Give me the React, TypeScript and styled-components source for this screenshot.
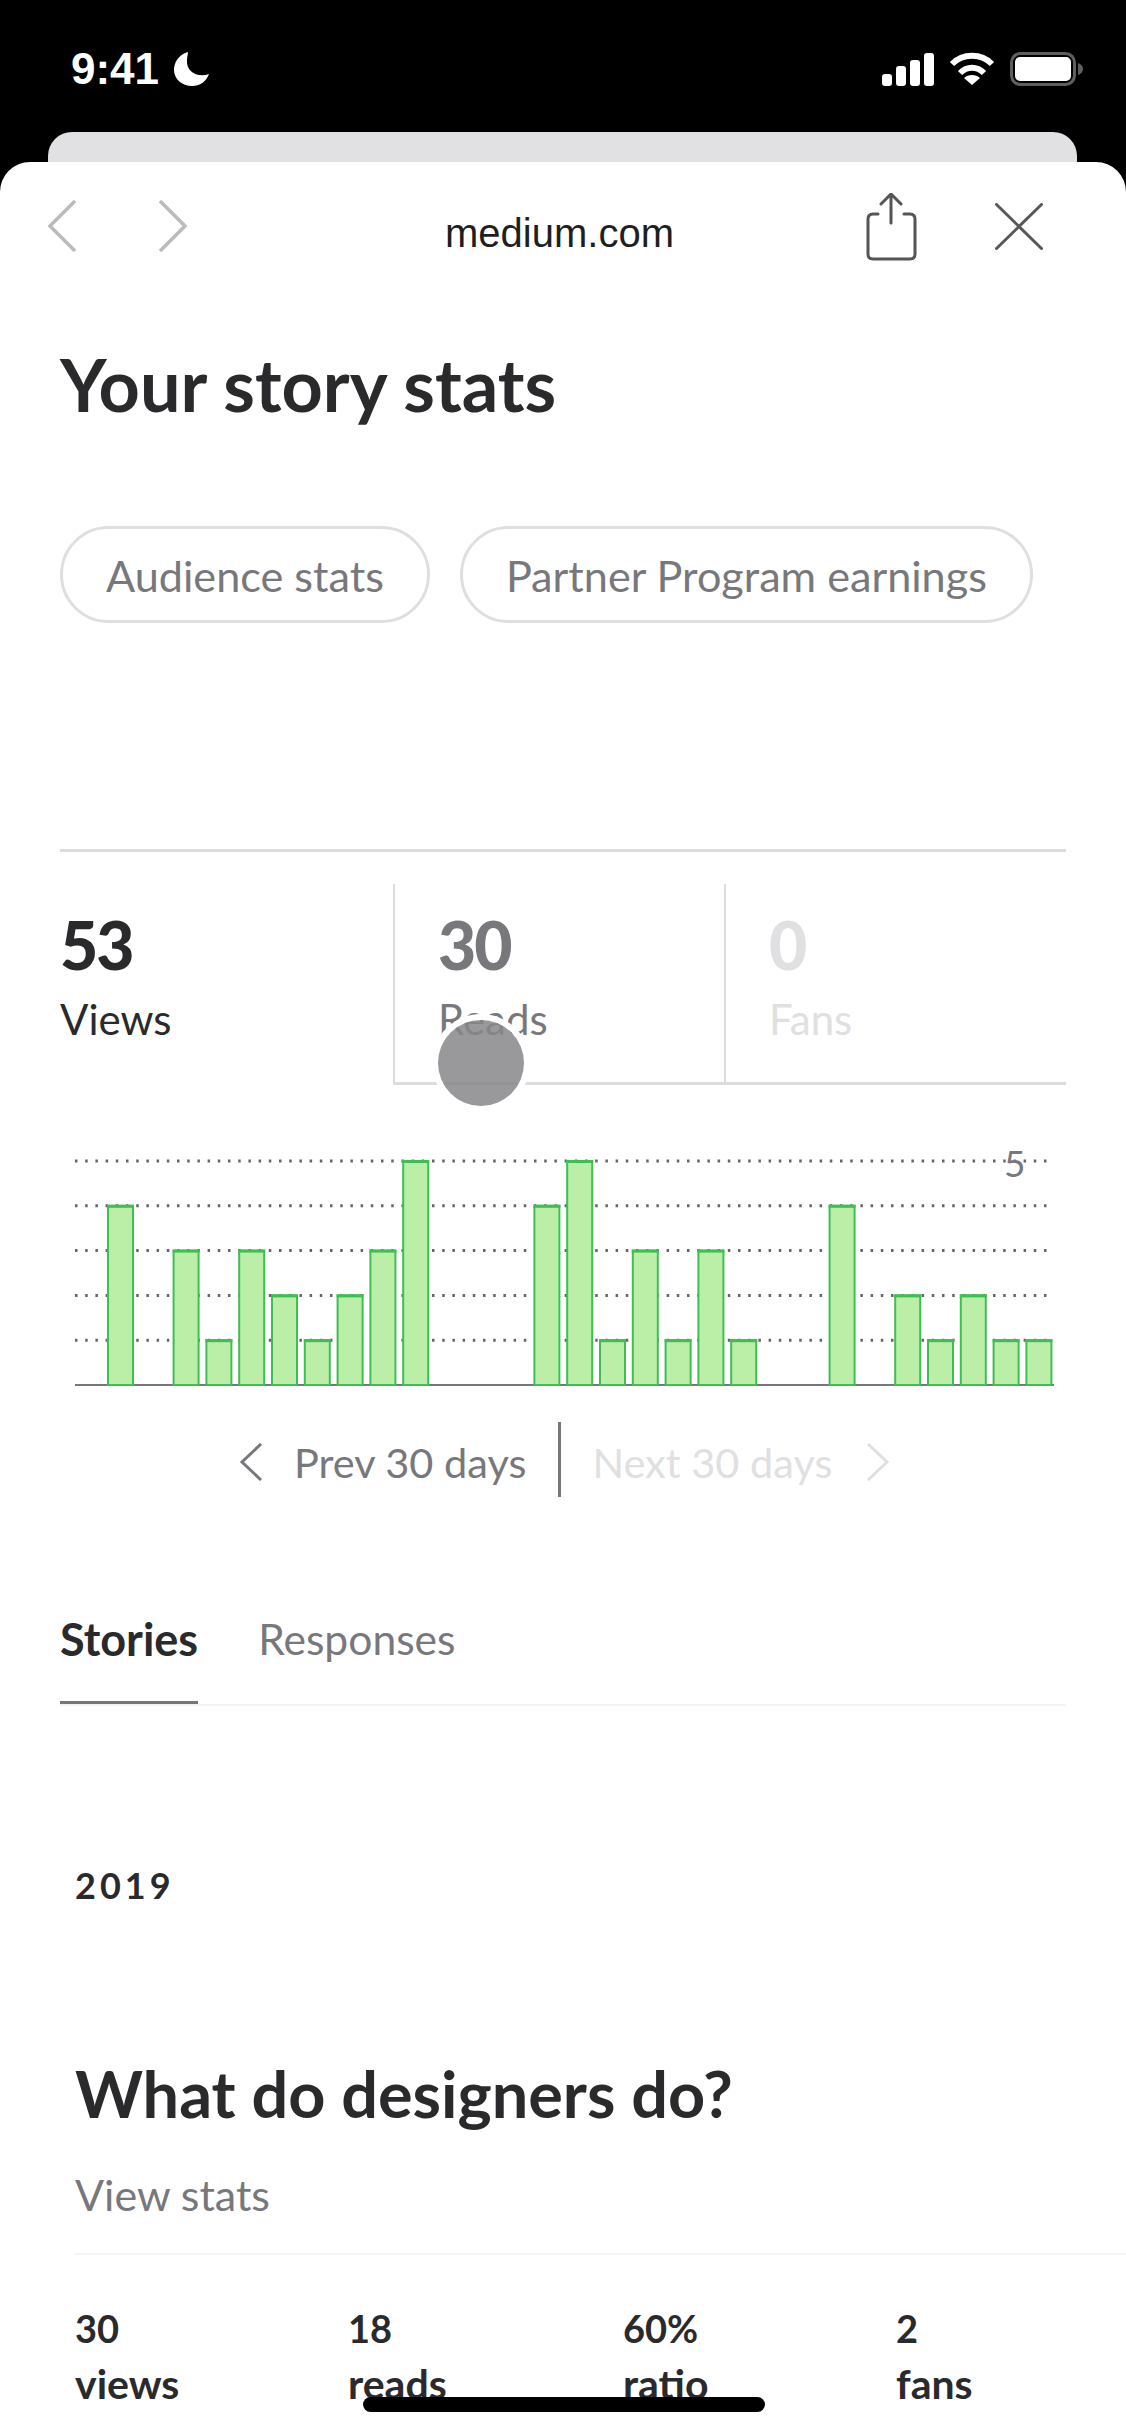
import React from "react";
import styled, { createGlobalStyle } from "styled-components";

const Global = createGlobalStyle`
  html, body { margin: 0; padding: 0; background: #000; }
  * { box-sizing: border-box; }
`;
const SANS = `Lato, "Noto Sans", sans-serif`;

const Screen = styled.div`
  position: relative;
  width: 1126px;
  height: 2436px;
  overflow: hidden;
  background: #000;
  font-family: ${SANS};
`;
const StatusBar = styled.div`
  height: 132px;
  padding: 47px 43px 0 71px;
  display: flex;
  justify-content: space-between;
  align-items: flex-start;
  color: #fff;
`;
const TimeGroup = styled.div`
  display: flex;
  align-items: center;
  gap: 15px;
  height: 44px;
`;
const Time = styled.span`
  font-family: "Liberation Sans", sans-serif;
  font-weight: 700;
  font-size: 44px;
  line-height: 44px;
`;
const StatusIcons = styled.div`
  display: flex;
  align-items: center;
  gap: 15px;
  height: 44px;
`;
const BackCard = styled.div`
  height: 30px;
  margin: 0 49px 0 48px;
  background: #e1e1e3;
  border-radius: 24px 24px 0 0;
`;
const Sheet = styled.div`
  height: 2274px;
  background: #fff;
  border-radius: 30px 30px 0 0;
`;
const NavBar = styled.div`
  height: 124px;
  padding: 31px 83px 0 48px;
  display: grid;
  grid-template-columns: 110px 30px 1fr 51px 126px;
  align-items: start;
`;
const NavIcon = styled.svg<{ $top: number; $left?: number }>`
  display: block;
  fill: none;
  margin-top: ${(p) => p.$top}px;
  margin-left: ${(p) => p.$left ?? 0}px;
`;
const Domain = styled.div`
  font-family: "Liberation Sans", sans-serif;
  font-size: 40px;
  line-height: 46px;
  color: #1f1f21;
  text-align: center;
  margin-top: 17px;
  padding-left: 65px;
`;
const Content = styled.div`
  padding: 0 60px;
`;
const Heading = styled.h1`
  margin: 58px 0 0;
  font-size: 72px;
  line-height: 80px;
  font-weight: 700;
  color: #2a2a2c;
`;
const PillRow = styled.div`
  display: flex;
  gap: 30px;
  margin-top: 102px;
`;
const Pill = styled.div`
  height: 97px;
  padding: 0 43px;
  border: 3px solid #dfdfe1;
  border-radius: 49px;
  display: flex;
  align-items: center;
  font-size: 43.2px;
  color: #78787c;
`;
const StatsBlock = styled.div`
  position: relative;
  margin-top: 226px;
  width: 1006px;
  border-top: 3px solid #dcdcde;
  padding-top: 32px;
  display: grid;
  grid-template-columns: 333px 331px 342px;
`;
const StatCell = styled.div<{ $tone: string; $first?: boolean }>`
  height: 201px;
  padding: 26px 0 0 ${(p) => (p.$first ? 0 : 43)}px;
  color: ${(p) => p.$tone};
  border-left: ${(p) => (p.$first ? "none" : "2px solid #dcdcde")};
  border-bottom: ${(p) => (p.$first ? "none" : "3px solid #dcdcde")};
`;
const StatNumber = styled.div`
  font-size: 66px;
  line-height: 70px;
  font-weight: 900;
  letter-spacing: -2px;
`;
const StatLabel = styled.div`
  font-size: 42px;
  line-height: 50px;
  margin-top: 14px;
`;
const Touch = styled.div`
  position: absolute;
  left: 378px;
  top: 168px;
  width: 86px;
  height: 86px;
  border-radius: 50%;
  background: rgba(135, 135, 137, 0.85);
  box-shadow: 0 0 0 6px #fff;
`;
const ChartWrap = styled.div`
  margin-top: 64px;
  height: 265px;
`;
const Chart = styled.svg`
  display: block;
`;
const Pager = styled.div`
  margin-top: 7px;
  height: 76px;
  display: flex;
  align-items: center;
  padding-left: 179px;
  font-size: 41.5px;
`;
const PagerLink = styled.div<{ $on: boolean }>`
  display: flex;
  align-items: center;
  gap: ${(p) => (p.$on ? 31 : 34)}px;
  padding-top: 5px;
  color: ${(p) => (p.$on ? "#78787c" : "#e0e0e2")};
`;
const PagerDivider = styled.div`
  width: 3px;
  height: 75px;
  background: #77777b;
  margin: 0 31px 0 32px;
`;
const Tabs = styled.div`
  margin-top: 103px;
  width: 1006px;
  display: flex;
  gap: 60px;
  border-bottom: 2px solid #f3f3f4;
  height: 106px;
`;
const Tab = styled.div<{ $active?: boolean }>`
  height: 104px;
  padding-top: 14px;
  font-size: ${(p) => (p.$active ? 45 : 42.6)}px;
  line-height: 50px;
  font-weight: ${(p) => (p.$active ? 700 : 400)};
  color: ${(p) => (p.$active ? "#2a2a2c" : "#78787c")};
  border-bottom: ${(p) => (p.$active ? "3px solid #77777b" : "none")};
`;
const Story = styled.div`
  padding-left: 15px;
  margin-right: -60px;
`;
const Year = styled.div`
  margin-top: 157px;
  font-size: 36px;
  line-height: 44px;
  font-weight: 700;
  letter-spacing: 4px;
  color: #2a2a2c;
`;
const StoryTitle = styled.h2`
  margin: 146px 0 0;
  font-size: 64.8px;
  line-height: 80px;
  font-weight: 700;
  color: #2a2a2c;
`;
const ViewStats = styled.div`
  margin-top: 37px;
  font-size: 43px;
  line-height: 50px;
  color: #78787c;
`;
const StoryDivider = styled.div`
  margin-top: 33px;
  height: 2px;
  background: #f4f4f5;
`;
const StoryStats = styled.div`
  margin-top: 46px;
  display: grid;
  grid-template-columns: 273px 275px 273px 1fr;
  font-weight: 700;
  color: #2a2a2c;
`;
const StoryValue = styled.div`
  font-size: 38px;
  line-height: 55px;
`;
const StoryLabel = styled.div`
  font-size: 41px;
  line-height: 56px;
`;
const HomeIndicator = styled.div`
  position: absolute;
  left: 363px;
  top: 2397px;
  width: 402px;
  height: 15px;
  border-radius: 8px;
  background: #000;
`;

const values = [0,4,0,3,1,3,2,1,2,3,5,0,0,0,4,5,1,3,1,3,1,0,0,4,0,2,1,2,1,1];
const storyStats = [
  ["30", "views"],
  ["18", "reads"],
  ["60%", "ratio"],
  ["2", "fans"],
];

function BarChart() {
  const unit = 44.8;
  const base = 236;
  const slot = 32.8;
  return (
    <Chart width="1006" height="265" viewBox="0 0 1006 265">
      {[1, 2, 3, 4, 5].map((n) => (
        <line key={n} x1="15" x2="994" y1={base - n * unit} y2={base - n * unit} stroke="#66666a" strokeWidth="3" strokeDasharray="2.5 7.7" />
      ))}
      <line x1="15" x2="994" y1={base} y2={base} stroke="#77777b" strokeWidth="2" />
      {values.map((v, i) =>
        v === 0 ? null : (
          <g key={i}>
            <rect x={48 + (i - 1) * slot} y={base - v * unit} width="25" height={v * unit} fill="#bbefa8" stroke="#3fbe52" strokeWidth="2" />
            <rect x={47 + (i - 1) * slot} y={base - v * unit - 1} width="27" height="3" fill="#3fbe52" />
          </g>
        )
      )}
      <text x="944" y="28" fontFamily={SANS} fontSize="37" fill="#78787c">5</text>
    </Chart>
  );
}

export default function App() {
  return (
    <Screen>
      <Global />
      <StatusBar>
        <TimeGroup>
          <Time>9:41</Time>
          <svg width="36" height="34" viewBox="0 0 36 34">
            <path d="M14 0 C4 3 0 11 0 18 C0 27 8 34 18 34 C26 34 32 30 35 22 C24 26 12 20 13 8 C13 5 14 2 14 0Z" fill="#fff" />
          </svg>
        </TimeGroup>
        <StatusIcons>
          <svg width="52" height="33" viewBox="0 0 52 33" fill="#fff">
            <rect x="0" y="21" width="10" height="12" rx="3" />
            <rect x="14" y="13" width="10" height="20" rx="3" />
            <rect x="28" y="7" width="10" height="26" rx="3" />
            <rect x="42" y="0" width="10" height="33" rx="3" />
          </svg>
          <svg width="46" height="34" viewBox="0 0 46 34" fill="none" stroke="#fff" strokeWidth="6">
            <path d="M3 12 C14 1 32 1 43 12" />
            <path d="M11 21 C18 14 28 14 35 21" />
            <path d="M23 33 L15 26 C19 22 27 22 31 26Z" fill="#fff" stroke="none" />
          </svg>
          <svg width="73" height="34" viewBox="0 0 73 34">
            <rect x="1.5" y="1.5" width="63" height="31" rx="9" fill="none" stroke="#5f5f62" strokeWidth="3" />
            <rect x="5" y="5" width="56" height="24" rx="5" fill="#fff" />
            <path d="M68 11 C71 12 73 14 73 17 C73 20 71 22 68 23Z" fill="#5f5f62" />
          </svg>
        </StatusIcons>
      </StatusBar>
      <BackCard />
      <Sheet>
        <NavBar>
          <NavIcon $top={6} width="30" height="54" viewBox="0 0 30 54" stroke="#bbbbbd" strokeWidth="3.5">
            <path d="M27 2 L2 27 L27 52" />
          </NavIcon>
          <NavIcon $top={6} width="30" height="54" viewBox="0 0 30 54" stroke="#bbbbbd" strokeWidth="3.5">
            <path d="M2 2 L27 27 L2 52" />
          </NavIcon>
          <Domain>medium.com</Domain>
          <NavIcon $top={0} width="51" height="68" viewBox="0 0 51 68" stroke="#555558" strokeWidth="3" strokeLinecap="round">
            <path d="M12 21 H7 Q2 21 2 26 V61 Q2 66 7 66 H44 Q49 66 49 61 V26 Q49 21 44 21 H38" />
            <path d="M25 30 V2 M15 11 L25 1 L35 11" />
          </NavIcon>
          <NavIcon $top={10} $left={78} width="48" height="47" viewBox="0 0 48 47" stroke="#58585a" strokeWidth="3" strokeLinecap="round">
            <path d="M1.5 1.5 L46.5 45.5 M46.5 1.5 L1.5 45.5" />
          </NavIcon>
        </NavBar>
        <Content>
          <Heading>Your story stats</Heading>
          <PillRow>
            <Pill>Audience stats</Pill>
            <Pill>Partner Program earnings</Pill>
          </PillRow>
          <StatsBlock>
            <StatCell $first $tone="#2a2a2c">
              <StatNumber>53</StatNumber>
              <StatLabel>Views</StatLabel>
            </StatCell>
            <StatCell $tone="#78787c">
              <StatNumber>30</StatNumber>
              <StatLabel>Reads</StatLabel>
            </StatCell>
            <StatCell $tone="#e0e0e2">
              <StatNumber>0</StatNumber>
              <StatLabel>Fans</StatLabel>
            </StatCell>
            <Touch />
          </StatsBlock>
          <ChartWrap>
            <BarChart />
          </ChartWrap>
          <Pager>
            <PagerLink $on>
              <svg width="24" height="38" viewBox="0 0 24 38" fill="none" stroke="#78787c" strokeWidth="3"><path d="M22 1 L3 19 L22 37" /></svg>
              Prev 30 days
            </PagerLink>
            <PagerDivider />
            <PagerLink $on={false}>
              Next 30 days
              <svg width="24" height="38" viewBox="0 0 24 38" fill="none" stroke="#e0e0e2" strokeWidth="3"><path d="M2 1 L21 19 L2 37" /></svg>
            </PagerLink>
          </Pager>
          <Tabs>
            <Tab $active>Stories</Tab>
            <Tab>Responses</Tab>
          </Tabs>
          <Story>
            <Year>2019</Year>
            <StoryTitle>What do designers do?</StoryTitle>
            <ViewStats>View stats</ViewStats>
            <StoryDivider />
            <StoryStats>
              {storyStats.map(([value, label]) => (
                <div key={label}>
                  <StoryValue>{value}</StoryValue>
                  <StoryLabel>{label}</StoryLabel>
                </div>
              ))}
            </StoryStats>
          </Story>
        </Content>
      </Sheet>
      <HomeIndicator />
    </Screen>
  );
}
